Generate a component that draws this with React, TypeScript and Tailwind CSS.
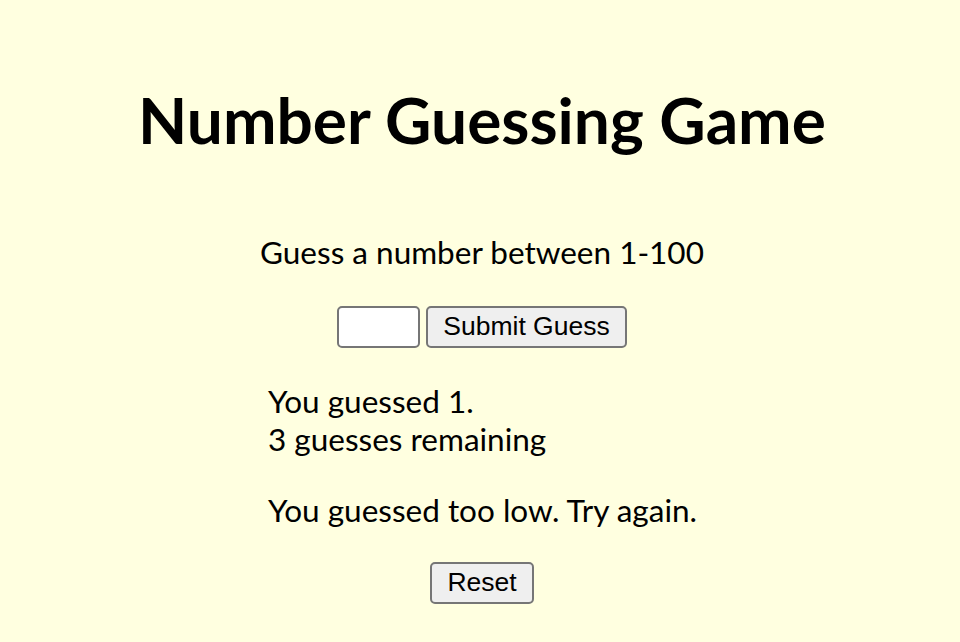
import { useState } from "react";

/* ================= COMPONENT ================= */

export default function App() {
  const [value, setValue] = useState("");

  return (
    <div className="min-h-screen bg-[#ffffe0] pl-[4px] font-['Lato',sans-serif] text-black">
      <div className="flex flex-col items-center">
        {/* TITLE */}
        <h1 className="mt-[82px] text-[64px] font-bold leading-[1.2]">
          Number Guessing Game
        </h1>

        {/* PROMPT */}
        <p className="mt-[75px] text-[31.5px] leading-[1.2]">
          Guess a number between 1-100
        </p>

        {/* FORM */}
        <div className="mt-[34px] flex items-center gap-[6px]">
          <input
            type="number"
            value={value}
            onChange={(e) => setValue(e.target.value)}
            className="h-[42px] w-[83px] rounded-[5px] border-[2px] border-[#767676] bg-white px-2 text-[26px] outline-none"
          />
          <button className="h-[42px] rounded-[5px] border-[2px] border-[#767676] bg-[#efefef] px-[15px] font-['Liberation_Sans',Arial,sans-serif] text-[26.5px] leading-[1.15]">
            Submit Guess
          </button>
        </div>

        {/* RESULTS */}
        <div className="mt-[34px] w-[480px] pl-[26px] text-[31.5px] leading-[38px]">
          <p>You guessed 1.</p>
          <p>3 guesses remaining</p>
          <p className="mt-[33px]">You guessed too low. Try again.</p>
        </div>

        {/* RESET */}
        <button className="mt-[33px] h-[42px] rounded-[5px] border-[2px] border-[#767676] bg-[#efefef] px-[15px] font-['Liberation_Sans',Arial,sans-serif] text-[26.5px] leading-[1.15]">
          Reset
        </button>
      </div>
    </div>
  );
}
